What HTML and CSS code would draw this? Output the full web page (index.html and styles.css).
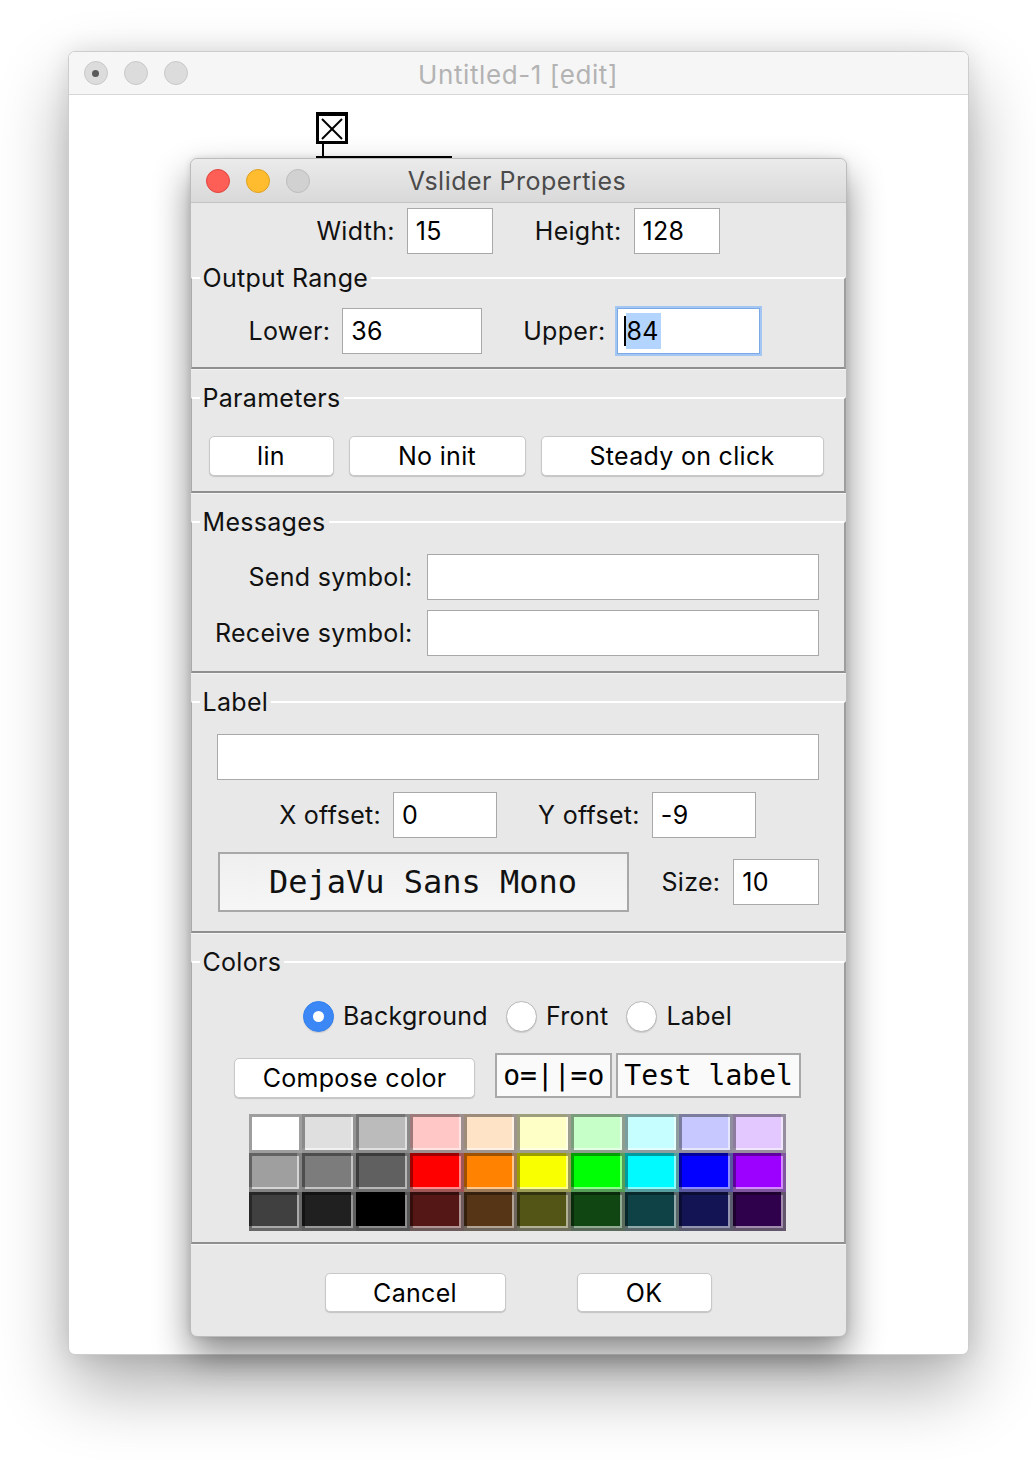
FILE: index.html
```html
<!DOCTYPE html>
<html>
<head>
<meta charset="utf-8">
<title>Vslider Properties</title>
<link rel="stylesheet" href="styles.css">
</head>
<body>
<div class="page">
  <div class="window">
    <div class="win-titlebar">
      <div class="lights">
        <span class="light grey dot"></span>
        <span class="light grey"></span>
        <span class="light grey"></span>
      </div>
      <div class="win-title">Untitled-1 [edit]</div>
      <div></div>
    </div>
    <div class="win-content">
      <svg class="vslider-obj" width="140" height="48" viewBox="0 0 140 48">
        <rect x="1.5" y="3.5" width="29" height="29" fill="#fff" stroke="#000" stroke-width="3"/>
        <rect x="0" y="2" width="32" height="4" fill="#000"/>
        <line x1="6" y1="9" x2="26" y2="29" stroke="#000" stroke-width="2"/>
        <line x1="26" y1="9" x2="6" y2="29" stroke="#000" stroke-width="2"/>
        <rect x="6" y="34" width="2" height="13" fill="#000"/>
        <rect x="0" y="46" width="136" height="2" fill="#000"/>
      </svg>

      <div class="dialog">
        <div class="dlg-titlebar">
          <div class="lights">
            <span class="light red"></span>
            <span class="light yellow"></span>
            <span class="light grey"></span>
          </div>
          <div class="dlg-title">Vslider Properties</div>
          <div></div>
        </div>

        <div class="dlg-body">
          <div class="row center size-row">
            <div class="field"><span>Width:</span><div class="entry w86">15</div></div>
            <div class="field"><span>Height:</span><div class="entry w86">128</div></div>
          </div>

          <div class="group first">
            <div class="group-title">Output Range</div>
            <div class="row center range-row">
              <div class="field"><span>Lower:</span><div class="entry w140">36</div></div>
              <div class="field"><span>Upper:</span><div class="entry w143 focused"><span class="caret"></span><span class="sel">84</span></div></div>
            </div>
          </div>

          <div class="group">
            <div class="group-title">Parameters</div>
            <div class="row param-row">
              <div class="btn b-lin">lin</div>
              <div class="btn b-init">No init</div>
              <div class="btn b-steady">Steady on click</div>
            </div>
          </div>

          <div class="group">
            <div class="group-title">Messages</div>
            <div class="msg-grid">
              <span class="msg-label">Send symbol:</span><div class="entry wide"></div>
              <span class="msg-label">Receive symbol:</span><div class="entry wide"></div>
            </div>
          </div>

          <div class="group">
            <div class="group-title">Label</div>
            <div class="label-entry-row"><div class="entry full"></div></div>
            <div class="row center offset-row">
              <div class="field"><span>X offset:</span><div class="entry w104">0</div></div>
              <div class="field"><span>Y offset:</span><div class="entry w104">-9</div></div>
            </div>
            <div class="row font-row">
              <div class="font-btn">DejaVu Sans Mono</div>
              <div class="field size-field"><span>Size:</span><div class="entry w86">10</div></div>
            </div>
          </div>

          <div class="group">
            <div class="group-title">Colors</div>
            <div class="row center radio-row">
              <div class="radio-item"><span class="radio on"></span><span>Background</span></div>
              <div class="radio-item"><span class="radio"></span><span>Front</span></div>
              <div class="radio-item"><span class="radio"></span><span>Label</span></div>
            </div>
            <div class="row center compose-row">
              <div class="btn b-compose">Compose color</div>
              <div class="samples">
                <div class="sample">o=||=o</div>
                <div class="sample">Test label</div>
              </div>
            </div>
            <div class="swatches">
              <span class="sw" style="background:#ffffff"></span>
              <span class="sw" style="background:#dfdfdf"></span>
              <span class="sw" style="background:#bbbbbb"></span>
              <span class="sw" style="background:#ffc7c6"></span>
              <span class="sw" style="background:#ffe3c6"></span>
              <span class="sw" style="background:#feffc7"></span>
              <span class="sw" style="background:#c6ffc7"></span>
              <span class="sw" style="background:#c6feff"></span>
              <span class="sw" style="background:#c7c8ff"></span>
              <span class="sw" style="background:#e3c7ff"></span>

              <span class="sw" style="background:#9f9f9f"></span>
              <span class="sw" style="background:#7c7c7c"></span>
              <span class="sw" style="background:#606060"></span>
              <span class="sw" style="background:#ff0000"></span>
              <span class="sw" style="background:#ff8300"></span>
              <span class="sw" style="background:#faff00"></span>
              <span class="sw" style="background:#00ff04"></span>
              <span class="sw" style="background:#00faff"></span>
              <span class="sw" style="background:#0400ff"></span>
              <span class="sw" style="background:#9c00ff"></span>

              <span class="sw" style="background:#404040"></span>
              <span class="sw" style="background:#202020"></span>
              <span class="sw" style="background:#000000"></span>
              <span class="sw" style="background:#551616"></span>
              <span class="sw" style="background:#553516"></span>
              <span class="sw" style="background:#535516"></span>
              <span class="sw" style="background:#0f4612"></span>
              <span class="sw" style="background:#0e4246"></span>
              <span class="sw" style="background:#121453"></span>
              <span class="sw" style="background:#2f004c"></span>
            </div>
          </div>

          <div class="footer">
            <div class="btn b-cancel">Cancel</div>
            <div class="btn b-ok">OK</div>
          </div>
        </div>
      </div>
    </div>
  </div>
</div>
</body>
</html>
```

FILE: styles.css
```css
html, body {
  margin: 0;
  padding: 0;
  background: #ffffff;
}

body {
  font-family: Inter, "Noto Sans", "Liberation Sans", sans-serif;
  font-size: 25px;
  letter-spacing: 0.3px;
  color: #111;
}

.page {
  height: 1484px;
  box-sizing: border-box;
  padding-top: 51px;
  display: flex;
  justify-content: center;
  align-items: flex-start;
  overflow: hidden;
}

.window {
  width: 901px;
  height: 1304px;
  box-sizing: border-box;
  border: 1px solid #cdcdcd;
  border-radius: 7px;
  background: #fff;
  display: flex;
  flex-direction: column;
  box-shadow: 0 32px 70px rgba(0, 0, 0, 0.32), 0 0 24px rgba(0, 0, 0, 0.10);
}

.win-titlebar {
  height: 43px;
  box-sizing: border-box;
  background: #f6f6f6;
  border-bottom: 1px solid #d6d6d6;
  border-radius: 6px 6px 0 0;
  display: grid;
  grid-template-columns: 1fr auto 1fr;
  align-items: center;
}

.lights {
  display: flex;
  gap: 16px;
  padding-left: 15px;
}

.light {
  width: 24px;
  height: 24px;
  box-sizing: border-box;
  border-radius: 50%;
  display: flex;
  align-items: center;
  justify-content: center;
}

.light.grey {
  background: #dcdcdc;
  border: 1px solid #c9c9c9;
}

.light.dot::after {
  content: "";
  width: 7px;
  height: 7px;
  border-radius: 50%;
  background: #5a5a5a;
}

.light.red {
  background: #fd5f57;
  border: 1px solid #e0443e;
}

.light.yellow {
  background: #febc2e;
  border: 1px solid #dea123;
}

.dlg-titlebar .light.grey {
  background: #d1d1d1;
  border: 1px solid #bdbdbd;
}

.win-title {
  color: #b3b3b3;
  font-size: 26px;
  letter-spacing: 0.6px;
  padding-top: 2px;
}

.win-content {
  flex: 1;
  position: relative;
  display: flex;
  justify-content: center;
  align-items: flex-start;
  padding-top: 63px;
}

.vslider-obj {
  position: absolute;
  left: 247px;
  top: 15px;
}

.dialog {
  width: 657px;
  box-sizing: border-box;
  border: 1px solid #bcbcbc;
  border-radius: 7px;
  background: #e8e8e8;
  overflow: hidden;
  box-shadow: 0 18px 36px rgba(0, 0, 0, 0.46), 0 0 6px rgba(0, 0, 0, 0.12);
  position: relative;
  z-index: 1;
}

.dlg-titlebar {
  height: 44px;
  box-sizing: border-box;
  background: linear-gradient(#ebebeb, #d9d9d9);
  border-bottom: 1px solid #c3c3c3;
  display: grid;
  grid-template-columns: 1fr auto 1fr;
  align-items: center;
}

.dlg-title {
  color: #4b4b4b;
  font-size: 25px;
  letter-spacing: 0.5px;
  padding-right: 2px;
}

.dlg-body {
  padding-top: 5px;
}

.row {
  display: flex;
  align-items: center;
}

.row.center {
  justify-content: center;
}

.field {
  display: flex;
  align-items: center;
  gap: 12px;
}

.size-row {
  gap: 42px;
}

.entry {
  height: 46px;
  box-sizing: border-box;
  background: #fff;
  border: 1px solid #a9a9a9;
  display: flex;
  align-items: center;
  padding-left: 8px;
  font-size: 25px;
  color: #000;
}

.w86 { width: 86px; }
.w104 { width: 104px; }
.w140 { width: 140px; }
.w143 { width: 143px; }
.wide { width: 392px; }
.full { width: 602px; }

.entry.focused {
  border: 1px solid #7aa9e6;
  box-shadow: 0 0 0 2px #a3c6f2;
  padding-left: 6px;
}

.caret {
  width: 2px;
  height: 30px;
  background: #000;
}

.sel {
  background: #b3d5fd;
  line-height: 36px;
  padding-right: 2px;
}

.group {
  margin-top: 28px;
  border-top: 2px solid #ffffff;
  border-right: 2px solid #9d9d9d;
  border-bottom: 2px solid #8f8f8f;
  border-left: 1px solid #aaaaaa;
  box-shadow: 0 1px 0 #f4f4f4;
}

.group.first {
  margin-top: 23px;
}

.group-title {
  width: fit-content;
  margin-top: -15px;
  margin-left: 8px;
  padding: 0 3px;
  height: 28px;
  line-height: 28px;
  background: #e8e8e8;
}

.range-row {
  margin-top: 16px;
  padding-bottom: 13px;
  gap: 41px;
  padding-right: 26px;
}

.param-row {
  margin-top: 24px;
  padding-bottom: 15px;
  padding-left: 17px;
  gap: 15px;
}

.btn {
  height: 40px;
  box-sizing: border-box;
  background: #ffffff;
  border: 1px solid #c8c8c8;
  border-radius: 5px;
  box-shadow: 0 1px 1px rgba(0, 0, 0, 0.16);
  display: flex;
  align-items: center;
  justify-content: center;
  font-size: 25px;
  color: #000;
}

.b-lin { width: 125px; }
.b-init { width: 177px; }
.b-steady { width: 283px; }

.msg-grid {
  margin-top: 18px;
  padding-bottom: 15px;
  padding-right: 25px;
  display: grid;
  grid-template-columns: auto 392px;
  column-gap: 14px;
  row-gap: 10px;
  justify-content: end;
  align-items: center;
}

.msg-label {
  text-align: right;
}

.label-entry-row {
  margin-top: 18px;
  padding-left: 25px;
}

.offset-row {
  margin-top: 12px;
  gap: 41px;
}

.font-row {
  margin-top: 14px;
  padding-left: 26px;
  padding-bottom: 19px;
  gap: 33px;
}

.font-btn {
  width: 411px;
  height: 60px;
  box-sizing: border-box;
  border: 2px solid #a8a8a8;
  background: linear-gradient(#efefef, #f6f6f6);
  display: flex;
  align-items: center;
  justify-content: center;
  font-family: "DejaVu Sans Mono", monospace;
  font-size: 32px;
  letter-spacing: 0;
  color: #111;
}

.size-field {
  gap: 13px;
}

.radio-row {
  margin-top: 24px;
  height: 32px;
}

.radio-item {
  display: flex;
  align-items: center;
  gap: 9px;
  margin-right: 18px;
}

.radio-item:last-child {
  margin-right: 0;
}

.radio {
  width: 31px;
  height: 31px;
  box-sizing: border-box;
  border-radius: 50%;
  background: #fff;
  border: 1px solid #b8b8b8;
  box-shadow: 0 1px 1px rgba(0, 0, 0, 0.12);
  display: flex;
  align-items: center;
  justify-content: center;
}

.radio.on {
  background: #3a87f5;
  border-color: #3381ef;
}

.radio.on::after {
  content: "";
  width: 11px;
  height: 11px;
  border-radius: 50%;
  background: #fff;
}

.compose-row {
  margin-top: 21px;
  align-items: flex-end;
  gap: 20px;
}

.b-compose {
  width: 241px;
}

.samples {
  display: flex;
  gap: 4px;
}

.sample {
  height: 45px;
  box-sizing: border-box;
  border: 2px solid #a9a9a9;
  background: #fafafa;
  padding: 0 6px;
  display: flex;
  align-items: center;
  font-family: "DejaVu Sans Mono", monospace;
  font-size: 28px;
  letter-spacing: 0;
  color: #000;
}

.swatches {
  margin: 16px auto 0;
  padding-bottom: 11px;
  width: 538px;
  display: grid;
  grid-template-columns: repeat(10, 1fr);
  grid-auto-rows: 39px;
}

.sw {
  display: block;
  box-shadow: inset 0 0 0 3px rgba(0, 0, 0, 0.38), inset -5px -5px 0 rgba(255, 255, 255, 0.55);
}

.footer {
  display: flex;
  justify-content: center;
  gap: 71px;
  padding: 29px 0 24px;
}

.b-cancel {
  width: 181px;
  height: 39px;
}

.b-ok {
  width: 135px;
  height: 39px;
}
```
